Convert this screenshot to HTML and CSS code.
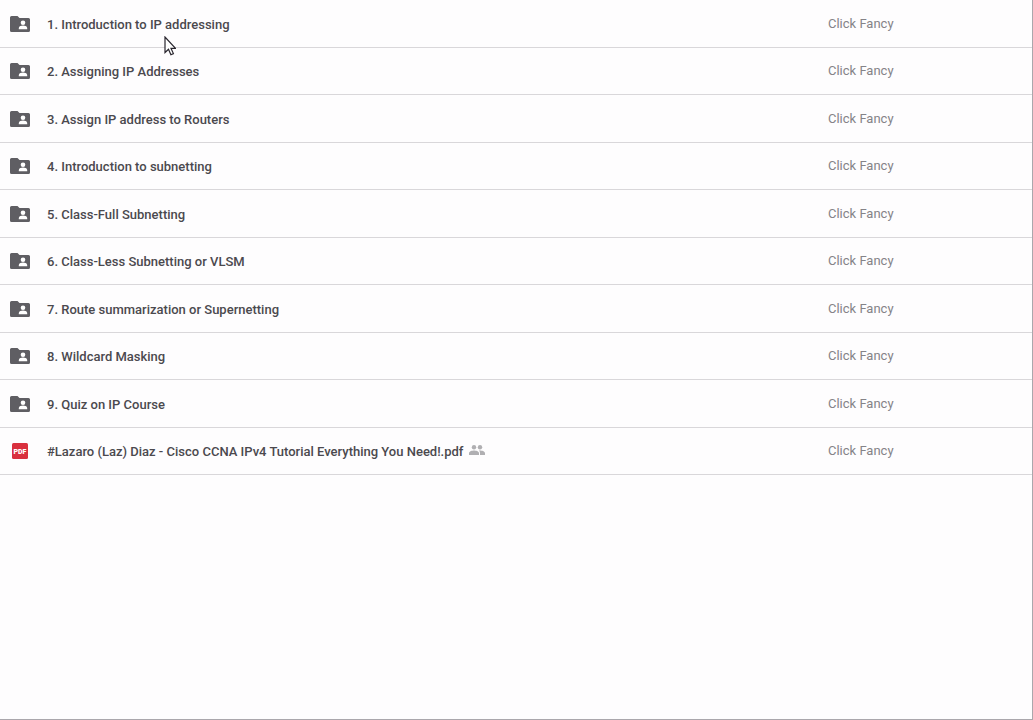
FILE: index.html
```html
<!DOCTYPE html>
<html lang="en">
<head>
    <meta charset="UTF-8">
    <meta name="viewport" content="width=device-width, initial-scale=1.0">
    <title>Files</title>
    <link rel="stylesheet" href="styles.css">
</head>
<body>
    <!-- Shared icons -->
    <svg class="sprite" aria-hidden="true">
        <symbol id="folder" viewBox="0 0 20 16">
            <path fill="#5f5e63" d="M1.500 0h6l2 2h9A1.500 1.500 0 0 1 20 3.500v11a1.500 1.500 0 0 1-1.500 1.500h-17A1.500 1.500 0 0 1 0 14.500v-13A1.500 1.500 0 0 1 1.500 0z"/>
            <circle fill="#fff" cx="13" cy="6.800" r="2.300"/>
            <path fill="#fff" d="M8.800 13.200v-1.200c0-1.600 2.700-2.400 4.200-2.400s4.200.800 4.200 2.400v1.200z"/>
        </symbol>
        <symbol id="people" viewBox="0 0 16 10">
            <g fill="#b0afb2">
                <circle cx="5" cy="2.200" r="2.200"/>
                <circle cx="11" cy="2.200" r="2.200"/>
                <path d="M0 10V8c0-1.700 3.300-2.500 5-2.500S10 6.300 10 8v2z"/>
                <path d="M11 10V8c0-1-.400-1.800-1.100-2.400L11 5.500c1.700 0 5 .800 5 2.500v2z"/>
            </g>
        </symbol>
    </svg>

    <main class="panel">
        <table class="files">
            <tbody>
                <tr>
                    <td class="name"><a href="#"><svg class="icon"><use href="#folder"/></svg>1. Introduction to IP addressing</a></td>
                    <td class="owner">Click Fancy</td>
                </tr>
                <tr>
                    <td class="name"><a href="#"><svg class="icon"><use href="#folder"/></svg>2. Assigning IP Addresses</a></td>
                    <td class="owner">Click Fancy</td>
                </tr>
                <tr>
                    <td class="name"><a href="#"><svg class="icon"><use href="#folder"/></svg>3. Assign IP address to Routers</a></td>
                    <td class="owner">Click Fancy</td>
                </tr>
                <tr>
                    <td class="name"><a href="#"><svg class="icon"><use href="#folder"/></svg>4. Introduction to subnetting</a></td>
                    <td class="owner">Click Fancy</td>
                </tr>
                <tr>
                    <td class="name"><a href="#"><svg class="icon"><use href="#folder"/></svg>5. Class-Full Subnetting</a></td>
                    <td class="owner">Click Fancy</td>
                </tr>
                <tr>
                    <td class="name"><a href="#"><svg class="icon"><use href="#folder"/></svg>6. Class-Less Subnetting or VLSM</a></td>
                    <td class="owner">Click Fancy</td>
                </tr>
                <tr>
                    <td class="name"><a href="#"><svg class="icon"><use href="#folder"/></svg>7. Route summarization or Supernetting</a></td>
                    <td class="owner">Click Fancy</td>
                </tr>
                <tr>
                    <td class="name"><a href="#"><svg class="icon"><use href="#folder"/></svg>8. Wildcard Masking</a></td>
                    <td class="owner">Click Fancy</td>
                </tr>
                <tr>
                    <td class="name"><a href="#"><svg class="icon"><use href="#folder"/></svg>9. Quiz on IP Course</a></td>
                    <td class="owner">Click Fancy</td>
                </tr>
                <tr>
                    <td class="name">
                        <a href="#"><svg class="icon" viewBox="0 0 20 16"><rect x="2" width="16" height="16" rx="1.500" fill="#d9303e"/><text class="pdf" x="10" y="11" text-anchor="middle">PDF</text></svg>#Lazaro (Laz) Diaz - Cisco CCNA IPv4 Tutorial Everything You Need!.pdf<svg class="shared"><use href="#people"/></svg></a>
                    </td>
                    <td class="owner">Click Fancy</td>
                </tr>
            </tbody>
        </table>
    </main>

    <svg class="pointer" viewBox="0 0 12 20" aria-hidden="true">
        <path d="M1 1v15.500l3.500-3.300 2.400 5.500 2.500-1.100-2.400-5.300h4.500z" fill="#fff" stroke="#29262e" stroke-width="1.200"/>
    </svg>
</body>
</html>
```

FILE: styles.css
```css
* {
    box-sizing: border-box;
}
body {
    margin: 0;
    background-color: #fefdfe;
    font-family: Roboto, "Liberation Sans", sans-serif;
    font-size: 13px;
    line-height: 16px;
}
.sprite {
    display: none;
}
.panel {
    min-height: 100vh;
    border-right: 1px solid #aaa7ac;
    border-bottom: 1px solid #aaa7ac;
}
.files {
    width: 100%;
    table-layout: fixed;
    border-collapse: separate;
    border-spacing: 0;
}
.files tr {
    height: 48px;
}
.files tr:nth-child(even) {
    height: 47px;
}
.files td {
    padding: 0;
    border-bottom: 1px solid #d9d7da;
    vertical-align: middle;
}
/* text top stays on a whole pixel in both row heights */
.files .name {
    padding-top: 16px;
    vertical-align: top;
}
.files tr:nth-child(even) .name {
    padding-top: 15px;
}
.name a {
    display: flex;
    align-items: flex-start;
    padding-left: 10px;
    color: #4b494e;
    font-weight: 500;
    line-height: 18px;
    text-decoration: none;
}
.files .owner {
    width: 204px;
    color: #858388;
}
.icon {
    width: 20px;
    height: 16px;
    margin-right: 17px;
}
.pdf {
    fill: #fff;
    font-size: 7px;
    font-weight: 900;
}
.shared {
    width: 16px;
    height: 10px;
    margin: 2px 0 0 6px;
}
.pointer {
    position: absolute;
    top: 36px;
    left: 164px;
    width: 12px;
    height: 20px;
}
```
